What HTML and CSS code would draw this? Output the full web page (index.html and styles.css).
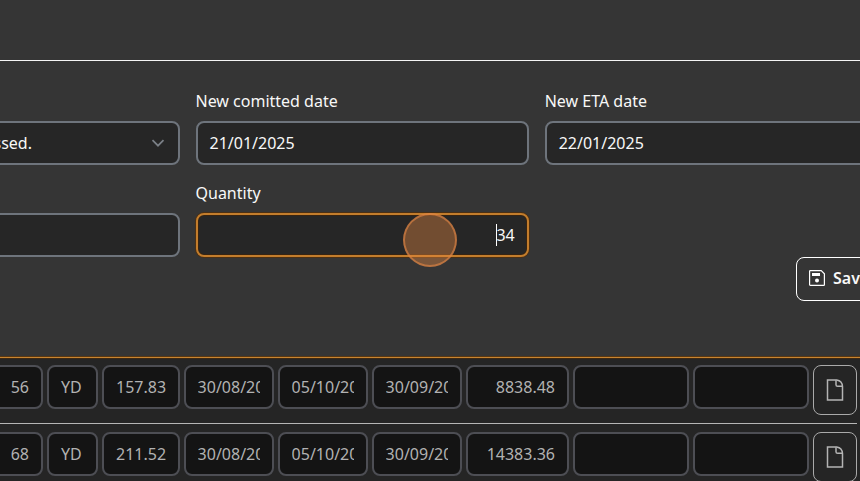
FILE: index.html
```html
<!DOCTYPE html>
<html lang="en">
<head>
<meta charset="utf-8">
<title>Order line</title>
<link rel="stylesheet" href="styles.css">
</head>
<body>
<header class="topbar"></header>
<main class="form">
  <div class="fields">
    <div class="field"><span class="label"></span>
      <div class="control select"><span>ssed.</span>
        <svg class="chevron" width="14" height="14" viewBox="0 0 14 14"><path d="M1.5 4.200 7 9.700l5.500-5.500"/></svg>
      </div>
    </div>
    <div class="field"><span class="label">New comitted date</span><div class="control">21/01/2025</div></div>
    <div class="field"><span class="label">New ETA date</span><div class="control">22/01/2025</div></div>
    <div class="field"><span class="label"></span><div class="control"></div></div>
    <div class="field"><span class="label">Quantity</span>
      <div class="control number focused"><span class="caret"></span>34<span class="click"></span></div>
    </div>
  </div>
  <div class="actions">
    <div class="save">
      <svg width="16" height="16" viewBox="0 0 16 16"><path class="line" d="M1.400.6h10.800l3.200 3.200v10.900a.7.7 0 0 1-.7.7H1.300a.7.7 0 0 1-.7-.7V1.300a.7.7 0 0 1 .8-.7z"/><path class="fill" d="M3 3h8v3H3z"/><circle class="fill" cx="8" cy="10.500" r="2"/></svg>
      <span>Save</span>
    </div>
  </div>
</main>
<section class="table">
  <div class="row">
    <div class="cell first num">56</div><div class="cell unit">YD</div><div class="cell price num">157.83</div>
    <div class="cell date"><span>30/08/2024</span></div><div class="cell date"><span>05/10/2024</span></div><div class="cell date"><span>30/09/2024</span></div>
    <div class="cell total num">8838.48</div><div class="cell note"></div><div class="cell note"></div>
    <div class="doc"><svg width="18" height="22" viewBox="0 0 18 22"><path d="M1.500 1h9.200C14.500 1.600 16.300 4 16.500 7.600V21h-15z"/><path d="M10 1.200v4.500q0 1.600 1.600 1.600h4.800"/></svg></div>
  </div>
  <div class="row">
    <div class="cell first num">68</div><div class="cell unit">YD</div><div class="cell price num">211.52</div>
    <div class="cell date"><span>30/08/2024</span></div><div class="cell date"><span>05/10/2024</span></div><div class="cell date"><span>30/09/2024</span></div>
    <div class="cell total num">14383.36</div><div class="cell note"></div><div class="cell note"></div>
    <div class="doc"><svg width="18" height="22" viewBox="0 0 18 22"><path d="M1.500 1h9.200C14.500 1.600 16.300 4 16.500 7.600V21h-15z"/><path d="M10 1.200v4.500q0 1.600 1.600 1.600h4.800"/></svg></div>
  </div>
</section>
</body>
</html>
```

FILE: styles.css
```css
* { box-sizing: border-box; }
body {
  margin: 0;
  height: 481px;
  overflow: hidden;
  background: #353535;
  color: #f8f8f8;
  font: 16px/24px "Noto Sans", sans-serif;
}
.topbar { height: 61px; border-bottom: 1px solid #f5f5f5; }
.form { height: 296px; padding-top: 28px; }
.fields {
  display: grid;
  grid-template-columns: repeat(3, 333.2px);
  gap: 16px;
  margin-left: -153.7px;
}
.label { display: block; height: 24px; margin-bottom: 8px; }
.control {
  display: flex;
  align-items: center;
  height: 44px;
  padding: 0 12px;
  border: 2px solid #6e747c;
  border-radius: 8px;
  background: #262626;
}
.select { justify-content: space-between; padding-left: 145.2px; padding-right: 13px; }
.chevron { fill: none; stroke: #7b8087; stroke-width: 1.7; }
.number { justify-content: flex-end; }
.focused {
  position: relative;
  border-color: #c37d2c;
  box-shadow: 0 0 0 1px #4c3014, inset 0 0 0 1px #372412;
}
.caret { width: 1px; height: 22px; margin-right: -1px; background: #fff; }
.click {
  position: absolute;
  left: 205px;
  top: -2.5px;
  width: 54px;
  height: 54px;
  border: 2px solid rgba(221, 132, 67, .65);
  border-radius: 50%;
  background: rgba(235, 140, 66, .39);
}
.actions { display: flex; padding-left: 796px; }
.save {
  flex: none;
  display: flex;
  align-items: center;
  gap: 8px;
  width: 94px;
  height: 44px;
  padding-left: 12px;
  border: 1px solid #fff;
  border-radius: 8px;
  font-weight: 600;
}
.save svg { margin-top: -2px; }
.save span { margin-top: -2px; }
.line { fill: none; stroke: #fff; stroke-width: 1.2; }
.fill { fill: #fff; }
.table {
  height: 124px;
  border-top: 1px solid #c88430;
  box-shadow: 0 -1px #593813, inset 0 1px #3d2914;
  background: #252525;
  color: #b2b2b2;
}
.row {
  display: flex;
  gap: 4px;
  width: 857px;
  padding: 8px 0;
  border-bottom: 1px solid #b6b6b6;
}
.row:first-child { padding-top: 7px; }
.cell {
  flex: none;
  height: 44px;
  padding: 8px 12px;
  border: 2px solid #4d4e54;
  border-radius: 8px;
  background: #141414;
}
.cell span { display: block; overflow: hidden; }
.num { text-align: right; }
.first { width: 63px; margin-left: -20px; }
.unit { width: 51px; }
.price { width: 78px; }
.date { width: 90px; }
.date span { margin-left: -0.4px; }
.total { width: 103px; }
.note { width: 116px; }
.doc {
  flex: none;
  display: flex;
  align-items: center;
  justify-content: center;
  width: 44px;
  height: 50px;
  border: 1px solid #aaa;
  border-radius: 8px;
}
.doc path { fill: none; stroke: #b4b4b4; stroke-width: 1.5; }
```
